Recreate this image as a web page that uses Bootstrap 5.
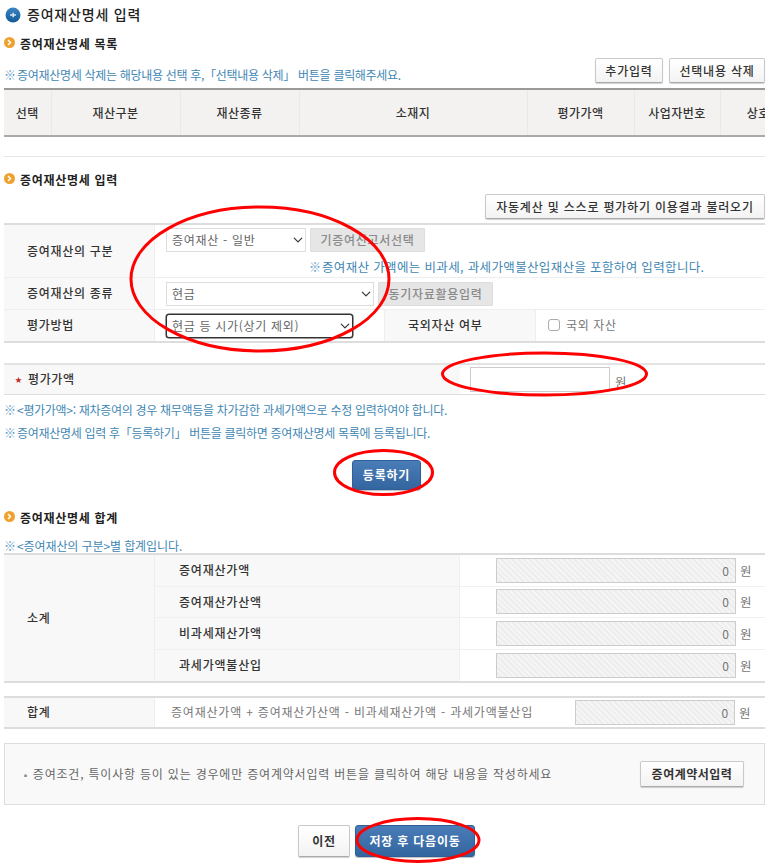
<!DOCTYPE html>
<html lang="ko">
<head>
<meta charset="utf-8">
<title>증여재산명세 입력</title>
<link href="https://cdn.jsdelivr.net/npm/bootstrap@5.3.0/dist/css/bootstrap.min.css" rel="stylesheet">
<style>
html,body{height:865px;overflow:hidden;}
body{background:#fff;font-family:"Noto Sans CJK KR","Noto Sans",sans-serif;font-size:12px;color:#333;line-height:1.2;}
.pg{position:relative;height:865px;padding:0 8px 0 4px;}
.ttl{height:30px;font-size:14px;font-weight:500;color:#222;padding:0 0 1px 1px;gap:6px;letter-spacing:.8px;}
.sec{height:28px;font-size:12px;font-weight:700;color:#222;gap:5px;letter-spacing:.7px;}
.sec svg{margin-top:-4px;}
.sec-b{height:27px;}
.nt{color:#3f87b4;font-size:12px;white-space:nowrap;letter-spacing:-.3px;}
.nt .mk{font-size:12px;margin-right:1px;color:#5c9cc7;letter-spacing:0;}
.nt-w{font-size:12.5px;letter-spacing:.35px;margin-left:143px;margin-top:7px;}
.tb{height:30px;}
.nt-t{padding-top:4px;}
.gp6{gap:6px;}
.bt{--bs-btn-font-size:12px;--bs-btn-padding-y:0;--bs-btn-padding-x:0;--bs-btn-border-radius:2px;height:25px;background:linear-gradient(#fff,#f3f3f3);border:1px solid #c9c9c9;border-bottom-color:#aaa;box-shadow:0 1px 1px rgba(0,0,0,.18);color:#333;font-weight:500;white-space:nowrap;letter-spacing:.8px;}
.bt-a{width:68px;}.bt-b{width:96px;}.bt-c{width:280px;}.bt-d{width:104px;height:26px;font-weight:700;letter-spacing:.5px;}
.bt-off{--bs-btn-font-size:12px;--bs-btn-padding-y:0;--bs-btn-padding-x:0;--bs-btn-border-radius:1px;height:24px;background:#e6e6e6;border:1px solid #ddd;color:#8a8a8a;font-weight:500;white-space:nowrap;letter-spacing:.7px;}
.bt-e{width:115px;}
.bt-p{--bs-btn-font-size:12px;--bs-btn-padding-y:0;--bs-btn-padding-x:0;--bs-btn-border-radius:3px;background:linear-gradient(#4a7db8,#33659f);border:1px solid #2f5f96;color:#fff;font-weight:700;box-shadow:0 1px 1px rgba(0,0,0,.25);white-space:nowrap;letter-spacing:.8px;}
.bt-reg{width:69px;height:30px;}
.bt-sv{width:120px;height:32px;}
.bt-pv{width:52px;height:32px;font-weight:700;}
.wrapx{overflow:hidden;}
.grd{border-collapse:collapse;table-layout:fixed;margin:0;}
.lst{width:792px;border-top:2px solid #999;border-bottom:2px solid #aaa;}
.lst th{height:47px;padding:2px 0 0;background:#f3f2f1;border-left:1px solid #e9e8e6;text-align:center;font-size:12px;font-weight:500;color:#333;letter-spacing:.5px;}
.lst th:first-child{border-left:0;}
.c1{width:47px;}.c2{width:129px;}.c3{width:119px;}.c4{width:228px;}.c5{width:107px;}.c6{width:86px;}.c7{width:76px;}
.rule{border:0;border-top:1px solid #e6e6e6;opacity:1;margin:19px 0 10px;}
.frm{border-top:2px solid #ddd;border-bottom:2px solid #ddd;}
.rw{display:flex;border-bottom:1px solid #eee;}
.rw:last-child{border-bottom:0;}
.lb{width:151px;flex:none;background:#f8f8f8;border-right:1px solid #eee;font-weight:500;color:#333;padding-left:23px;display:flex;align-items:center;letter-spacing:.7px;}
.v{flex:1;min-width:0;padding-left:11px;display:flex;align-items:center;}
.v-top{display:block;padding-top:3px;}
.h52{height:53px;}.h32{height:32px;}.h31{height:31px;}
.sel{font-size:12px;height:24px;min-height:0;padding:0 20px 0 5px;border:1px solid #ddd;border-radius:0;color:#666;background-size:12px 10px;background-position:right 1px center;font-family:inherit;letter-spacing:.7px;}
.sel-a{width:140px;}.sel-b{width:208px;}
.sel-c{width:187px;border:1px solid #333;border-radius:3px;box-shadow:0 0 0 .5px #333;}
.lb2{width:152px;flex:none;margin-left:31px;padding-left:23px;background:#f8f8f8;border-left:1px solid #eee;border-right:1px solid #eee;font-weight:500;display:flex;align-items:center;color:#333;letter-spacing:.7px;}
.ck{width:12px;height:12px;margin:0 6px 0 0;border:1px solid #aaa;border-radius:2px;}
.gy{color:#777;letter-spacing:.6px;}
.gap-s{height:20px;}
.amt{border-top:2px solid #e3e3e3;border-bottom:1px solid #ddd;height:32px;display:flex;}
.amt-l{width:456px;flex:none;background:#f8f8f8;padding-left:11px;display:flex;align-items:center;gap:6px;font-weight:500;color:#333;letter-spacing:.6px;}
.star{color:#c8242b;font-size:7px;letter-spacing:0;}
.ipt{width:140px;height:25px;border:1px solid #ccc;border-radius:0;padding:0 4px;font-size:12px;}
.won{margin-left:5px;color:#777;font-size:12.5px;padding-top:3px;}
.amt-v{display:flex;align-items:center;padding-left:10px;}
.nts{padding-top:4px;}
.nts .nt{height:23px;display:flex;align-items:center;}
.cta{margin-top:15px;height:30px;padding-left:4px;}
.sec-c{margin-top:14px;}
.nt3{height:14px;margin-top:7px;letter-spacing:-.1px;}
.sum{border-top:2px solid #ddd;border-bottom:2px solid #ddd;display:flex;}
.sum-l{width:151px;flex:none;background:#f8f8f8;border-right:1px solid #eee;padding-left:23px;display:flex;align-items:center;font-weight:500;letter-spacing:.7px;}
.sum-r{flex:1;min-width:0;}
.sr{height:31.5px;display:flex;border-bottom:1px solid #f0f0f0;}
.sr:last-child{border-bottom:0;}
.sr-l{width:305px;flex:none;background:#f8f8f8;padding-left:24px;display:flex;align-items:center;font-weight:500;border-right:1px solid #f0f0f0;letter-spacing:.8px;}
.sr-v{flex:1;display:flex;align-items:center;padding-left:36px;}
.hat{height:25px;min-height:0;border:1px solid #ccc;border-radius:0;text-align:right;padding:0 6px;font-size:12px;color:#777;background:repeating-linear-gradient(45deg,#f5f5f5 0 2px,#ededed 2px 4px);}
.hat-a{width:240px;}.hat-b{width:160px;}
.won2{margin-left:4px;color:#777;font-size:12.5px;}
.tot{margin-top:13px;border-top:2px solid #ddd;border-bottom:2px solid #ddd;display:flex;height:33px;}
.tot-f{flex:1;display:flex;align-items:center;padding-left:16px;color:#777;white-space:nowrap;letter-spacing:.8px;}
.tot-f .hat{margin-left:42px;}
.tot-f .won2{letter-spacing:0;}
.bx{margin-top:14px;height:62px;border:1px solid #ddd;background:#f9f9f9;padding:0 20px 0 16px;color:#666;letter-spacing:.8px;}
.dotm{font-size:9px;margin-right:2px;color:#888;}
.bot{margin-top:20px;gap:5px;padding-left:4px;}
.ovl{position:absolute;left:0;top:0;pointer-events:none;}
</style>
</head>
<body>
<div class="pg">
  <div class="ttl d-flex align-items-center">
    <svg width="16" height="16" viewBox="0 0 16 16"><defs><linearGradient id="bg" x1="0" y1="0" x2="0" y2="1"><stop offset="0" stop-color="#3a86c2"/><stop offset="1" stop-color="#145a96"/></linearGradient></defs><circle cx="8" cy="8" r="7.5" fill="url(#bg)"/><path d="M5 8h6M8.2 5.8v4.4" stroke="#cfe3f3" stroke-width="1.6"/></svg>
    <span>증여재산명세 입력</span>
  </div>
  <div class="sec d-flex align-items-center">
    <svg width="11" height="11" viewBox="0 0 11 11"><circle cx="5.5" cy="5.5" r="5.5" fill="#f0a02c"/><path d="M4 3l2.5 2.5L4 8" fill="none" stroke="#fff" stroke-width="1.5"/></svg>
    <span>증여재산명세 목록</span>
  </div>
  <div class="tb d-flex justify-content-between">
    <div class="nt nt-t align-self-center"><span class="mk">※</span>증여재산명세 삭제는 해당내용 선택 후,「선택내용 삭제」 버튼을 클릭해주세요.</div>
    <div class="d-flex gp6"><button type="button" class="btn bt bt-a">추가입력</button><button type="button" class="btn bt bt-b">선택내용 삭제</button></div>
  </div>
  <div class="wrapx">
    <table class="grd lst"><colgroup><col class="c1"><col class="c2"><col class="c3"><col class="c4"><col class="c5"><col class="c6"><col class="c7"></colgroup>
      <thead><tr><th>선택</th><th>재산구분</th><th>재산종류</th><th>소재지</th><th>평가가액</th><th>사업자번호</th><th>상호</th></tr></thead>
    </table>
  </div>
  <hr class="rule">
  <div class="sec sec-b d-flex align-items-center">
    <svg width="11" height="11" viewBox="0 0 11 11"><circle cx="5.5" cy="5.5" r="5.5" fill="#f0a02c"/><path d="M4 3l2.5 2.5L4 8" fill="none" stroke="#fff" stroke-width="1.5"/></svg>
    <span>증여재산명세 입력</span>
  </div>
  <div class="d-flex justify-content-end mb-1"><button type="button" class="btn bt bt-c">자동계산 및 스스로 평가하기 이용결과 불러오기</button></div>
  <div class="frm">
    <div class="rw h52">
      <div class="lb">증여재산의 구분</div>
      <div class="v v-top">
        <div class="d-flex gap-1"><select class="form-select sel sel-a"><option>증여재산 - 일반</option></select><button type="button" class="btn bt-off bt-e">기증여신고서선택</button></div>
        <div class="nt nt-w"><span class="mk">※</span>증여재산 가액에는 비과세, 과세가액불산입재산을 포함하여 입력합니다.</div>
      </div>
    </div>
    <div class="rw h32">
      <div class="lb">증여재산의 종류</div>
      <div class="v gap-1"><select class="form-select sel sel-b"><option>현금</option></select><button type="button" class="btn bt-off bt-e">동기자료활용입력</button></div>
    </div>
    <div class="rw h31">
      <div class="lb">평가방법</div>
      <div class="v"><select class="form-select sel sel-c"><option>현금 등 시가(상기 제외)</option></select>
        <div class="lb2 align-self-stretch">국외자산 여부</div>
        <label class="d-flex align-items-center gy ms-2 ps-1"><input type="checkbox" class="form-check-input ck">국외 자산</label>
      </div>
    </div>
  </div>
  <div class="gap-s"></div>
  <div class="amt">
    <div class="amt-l"><span class="star">★</span>평가가액</div>
    <div class="amt-v"><input type="text" class="form-control ipt" aria-label="평가가액"><span class="won">원</span></div>
  </div>
  <div class="nts">
    <div class="nt"><span class="mk">※</span>&lt;평가가액&gt;: 재차증여의 경우 채무액등을 차가감한 과세가액으로 수정 입력하여야 합니다.</div>
    <div class="nt"><span class="mk">※</span>증여재산명세 입력 후「등록하기」 버튼을 클릭하면 증여재산명세 목록에 등록됩니다.</div>
  </div>
  <div class="cta d-flex justify-content-center"><button type="button" class="btn bt-p bt-reg">등록하기</button></div>
  <div class="sec sec-c d-flex align-items-center">
    <svg width="11" height="11" viewBox="0 0 11 11"><circle cx="5.5" cy="5.5" r="5.5" fill="#f0a02c"/><path d="M4 3l2.5 2.5L4 8" fill="none" stroke="#fff" stroke-width="1.5"/></svg>
    <span>증여재산명세 합계</span>
  </div>
  <div class="nt nt3"><span class="mk">※</span>&lt;증여재산의 구분&gt;별 합계입니다.</div>
  <div class="sum">
    <div class="sum-l">소계</div>
    <div class="sum-r">
      <div class="sr"><div class="sr-l">증여재산가액</div><div class="sr-v"><input class="form-control hat hat-a" value="0" readonly aria-label="증여재산가액"><span class="won2">원</span></div></div>
      <div class="sr"><div class="sr-l">증여재산가산액</div><div class="sr-v"><input class="form-control hat hat-a" value="0" readonly aria-label="증여재산가산액"><span class="won2">원</span></div></div>
      <div class="sr"><div class="sr-l">비과세재산가액</div><div class="sr-v"><input class="form-control hat hat-a" value="0" readonly aria-label="비과세재산가액"><span class="won2">원</span></div></div>
      <div class="sr"><div class="sr-l">과세가액불산입</div><div class="sr-v"><input class="form-control hat hat-a" value="0" readonly aria-label="과세가액불산입"><span class="won2">원</span></div></div>
    </div>
  </div>
  <div class="tot">
    <div class="sum-l">합계</div>
    <div class="tot-f">증여재산가액 + 증여재산가산액 - 비과세재산가액 - 과세가액불산입<input class="form-control hat hat-b" value="0" readonly aria-label="합계"><span class="won2">원</span></div>
  </div>
  <div class="bx d-flex align-items-center justify-content-between">
    <span><span class="dotm">▪</span>증여조건, 특이사항 등이 있는 경우에만 증여계약서입력 버튼을 클릭하여 해당 내용을 작성하세요</span>
    <button type="button" class="btn bt bt-d">증여계약서입력</button>
  </div>
  <div class="bot d-flex justify-content-center">
    <button type="button" class="btn bt bt-pv">이전</button>
    <button type="button" class="btn bt-p bt-sv">저장 후 다음이동</button>
  </div>
  <svg class="ovl" width="773" height="865" viewBox="0 0 773 865" fill="none" stroke="#f00" stroke-width="3">
    <ellipse cx="260" cy="279" rx="129" ry="72"/>
    <ellipse cx="544.5" cy="374" rx="102" ry="21"/>
    <ellipse cx="383.5" cy="472.5" rx="49" ry="22"/>
    <ellipse cx="418" cy="840" rx="61" ry="21.5"/>
  </svg>
</div>
</body>
</html>
